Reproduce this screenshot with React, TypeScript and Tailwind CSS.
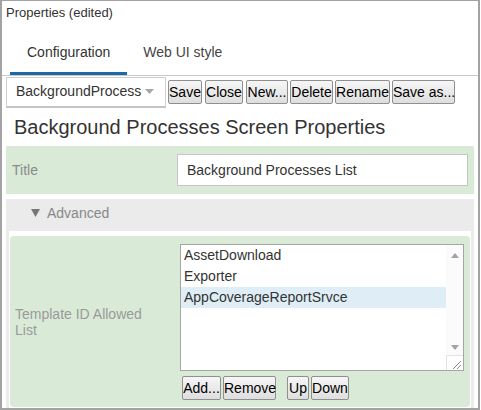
import React from "react";

const font = "font-['Liberation_Sans',Arial,sans-serif]";

function Btn({ children, className = "" }: { children: React.ReactNode; className?: string }) {
  return (
    <button
      className={`shrink-0 h-[24px] px-0 border border-[#8f8f8f] bg-[linear-gradient(#f6f6f6,#dedede)] text-[14px] leading-[22px] text-black rounded-[2px] whitespace-nowrap ${className}`}
    >
      {children}
    </button>
  );
}

export default function App() {
  return (
    <div className={`w-[481px] h-[410px] bg-white ${font}`}>
      <div className="w-[480px] h-[410px] overflow-hidden border-t border-l-2 border-r-2 border-b-2 border-[#a3a3a3]">
        <div className="pl-[4px] pt-[4px] h-[19px] text-[13px] leading-[16px] text-[#333]">Properties (edited)</div>
        <div className="h-[56px] flex border-b border-[#c8c8c8] pl-[8px]">
          <div className="h-full px-[17px] pt-[24px] border-b-[3px] border-[#1b6aa7] text-[14px] leading-[17px] text-[#333]">
            Configuration
          </div>
          <div className="h-full px-[16px] pt-[24px] text-[14px] leading-[17px] text-[#444]">Web UI style</div>
        </div>
        <div className="flex items-center pl-[4px] h-[32px] gap-[2px]">
          <div className="shrink-0 w-[160px] h-[31px] border border-[#cfcfcf] border-b-2 border-b-[#c4c4c4] flex items-center pl-[9px] pr-[11px] justify-between mr-[-1px]">
            <span className="text-[14px] text-[#333]">BackgroundProcess</span>
            <svg width="9" height="5" viewBox="0 0 9 5">
              <path d="M0 0 H9 L4.5 5 Z" fill="#a6a6a6" />
            </svg>
          </div>
          <Btn className="w-[34px] ml-[1px]">Save</Btn>
          <Btn className="w-[38px] ml-[1px]">Close</Btn>
          <Btn className="w-[42px] ml-[1px]">New...</Btn>
          <Btn className="w-[43px]">Delete</Btn>
          <Btn className="w-[55px]">Rename</Btn>
          <Btn className="w-[63px]">Save as...</Btn>
        </div>
        <div className="h-[38px] flex items-center pt-[1px] pl-[12px] text-[20px] leading-[23px] text-[#333]">
          Background Processes Screen Properties
        </div>
        <div className="mx-[4px] w-[468px] h-[48px] bg-[#d9ead7] flex items-center pr-[6px]">
          <div className="w-[171px] pl-[6px] text-[14px] text-[#8a8a8a]">Title</div>
          <div className="flex-1 h-[32px] bg-white border border-[#c6c6c6] flex items-center pl-[9px] text-[14px] text-[#333]">
            Background Processes List
          </div>
        </div>
        <div className="mx-[4px] mt-[5px] w-[468px] bg-[#ebebeb] px-[3px]">
          <div className="h-[32px] flex items-start pt-[6px] pl-[22px] gap-[7px] text-[14px] leading-[16px] text-[#888]">
            <svg width="9" height="8" viewBox="0 0 9 8" className="mt-[4px]">
              <path d="M0 0 H9 L4.5 8 Z" fill="#777" />
            </svg>
            <span>Advanced</span>
          </div>
          <div className="bg-white px-[1px] pt-[5px] pb-[3px]">
            <div className="bg-[#d9ead7] rounded-[4px] flex items-center pt-[8px] pb-[7px] pr-[6px]">
              <div className="w-[170px] pl-[5px]">
                <div className="w-[140px] text-[14px] leading-[16px] text-[#9a9a9a]">Template ID Allowed List</div>
              </div>
              <div className="flex-1 flex flex-col gap-[5px]">
                <div className="h-[127px] bg-white border border-[#a5a5a5] flex">
                  <div className="flex-1 flex flex-col text-[14px] text-[#333]">
                    <div className="h-[21px] leading-[21px] pl-[3px]">AssetDownload</div>
                    <div className="h-[21px] leading-[21px] pl-[3px]">Exporter</div>
                    <div className="h-[21px] leading-[21px] pl-[3px] bg-[#dfeef6]">AppCoverageReportSrvce</div>
                  </div>
                  <div className="w-[17px] flex flex-col bg-[#fbfbfb]">
                    <div className="h-[16px] flex items-center justify-center mt-[2px]">
                      <svg width="8" height="5" viewBox="0 0 8 5">
                        <path d="M0 5 H8 L4 0 Z" fill="#a3a3a3" />
                      </svg>
                    </div>
                    <div className="flex-1" />
                    <div className="h-[16px] flex items-center justify-center">
                      <svg width="8" height="5" viewBox="0 0 8 5">
                        <path d="M0 0 H8 L4 5 Z" fill="#a3a3a3" />
                      </svg>
                    </div>
                    <div className="h-[15px] border-t border-l border-[#e2e2e2] bg-white relative">
                      <svg width="16" height="15" viewBox="0 0 16 15" className="absolute right-0 bottom-0">
                        <path d="M14 6 L6 14 M14 10 L10 14" stroke="#8a8a8a" strokeWidth="1" />
                      </svg>
                    </div>
                  </div>
                </div>
                <div className="flex gap-[2px] pl-[2px]">
                  <Btn className="w-[39px]">Add...</Btn>
                  <Btn className="w-[53px]">Remove</Btn>
                  <Btn className="w-[22px] ml-[9px]">Up</Btn>
                  <Btn className="w-[38px]">Down</Btn>
                </div>
              </div>
            </div>
          </div>
        </div>
      </div>
    </div>
  );
}
